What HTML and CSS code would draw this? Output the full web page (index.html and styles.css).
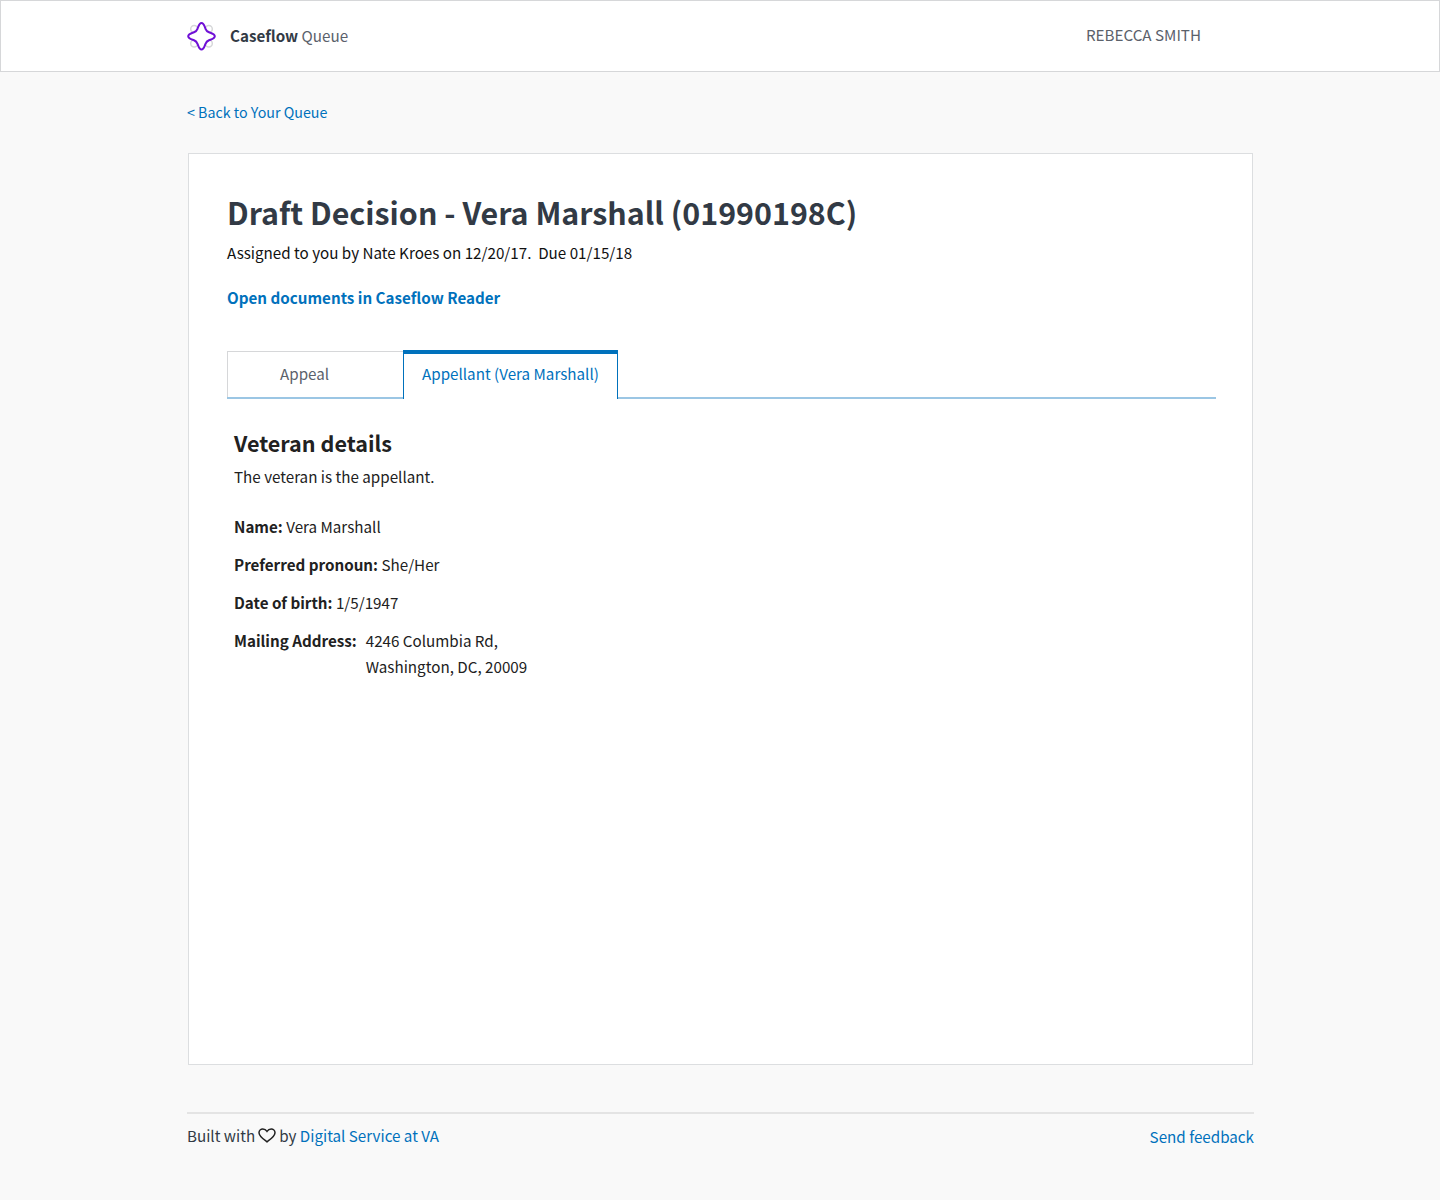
FILE: index.html
```html
<!DOCTYPE html>
<html lang="en">
<head>
<meta charset="utf-8">
<title>Caseflow Queue</title>
<link rel="stylesheet" href="styles.css">
</head>
<body>
<header class="topbar">
  <div class="topbar-inner">
    <a class="brand">
      <svg class="logo" width="32" height="32" viewBox="-0.5 -0.3 32 32" fill="none">
        <g stroke="#d6d7d9" stroke-width="1.5"><circle cx="8.7" cy="8.7" r="3.5"/><circle cx="23.3" cy="8.7" r="3.5"/><circle cx="8.7" cy="23.3" r="3.5"/><circle cx="23.3" cy="23.3" r="3.5"/></g>
        <path d="M16 2.700C18.300 2.700 19 6 20 8.500C20.800 10.500 21.500 11.200 23.500 12C26 13 29.300 13.700 29.300 16C29.300 18.300 26 19 23.500 20C21.500 20.800 20.800 21.500 20 23.500C19 26 18.300 29.300 16 29.300C13.700 29.300 13 26 12 23.500C11.200 21.500 10.500 20.800 8.500 20C6 19 2.700 18.300 2.700 16C2.700 13.700 6 13 8.500 12C10.500 11.200 11.200 10.500 12 8.500C13 6 13.700 2.700 16 2.700Z" stroke="#6f0fd6" stroke-width="2" fill="#fff" fill-opacity="0.9"/>
      </svg>
      <span class="brand-text"><strong>Caseflow</strong> Queue</span>
    </a>
    <div class="user">REBECCA SMITH</div>
  </div>
</header>
<div class="page">
  <a class="back">&lt; Back to Your Queue</a>
  <main class="card">
    <h1>Draft Decision - Vera Marshall (01990198C)</h1>
    <p class="assigned">Assigned to you by Nate Kroes on 12/20/17.&nbsp; Due 01/15/18</p>
    <a class="open-docs">Open documents in Caseflow Reader</a>
    <div class="tabs">
      <div class="tab">Appeal</div>
      <div class="tab active">Appellant (Vera Marshall)</div>
    </div>
    <section class="details">
      <h2>Veteran details</h2>
      <p class="intro">The veteran is the appellant.</p>
      <p class="row"><b>Name:</b> Vera Marshall</p>
      <p class="row"><b>Preferred pronoun:</b> She/Her</p>
      <p class="row"><b>Date of birth:</b> 1/5/1947</p>
      <div class="address"><b>Mailing Address:</b><div>4246 Columbia Rd,<br>Washington, DC, 20009</div></div>
    </section>
  </main>
  <footer class="footer">
    <div class="credit">Built with<svg class="heart" width="18" height="15" viewBox="0 0 18 15" fill="none"><path d="M9 13.800C6 11.500 1 8.500 1 4.800C1 2.500 2.800 1 4.800 1C6.500 1 8 1.800 9 3.300C10 1.800 11.500 1 13.200 1C15.200 1 17 2.500 17 4.800C17 8.500 12 11.500 9 13.800Z" stroke="#212121" stroke-width="1.500"/></svg>by <a>Digital Service at VA</a></div>
    <a class="feedback">Send feedback</a>
  </footer>
</div>
</body>
</html>
```
FILE: styles.css
```css
* { box-sizing: border-box; }
html, body { margin: 0; }
body {
  background: #f9f9f9;
  color: #212121;
  font-family: "Noto Sans CJK SC", "Lato", sans-serif;
  font-size: 15.2px;
  line-height: 26px;
  min-height: 1200px;
}
a { color: #0071bc; text-decoration: none; }
.topbar {
  height: 72px;
  background: #fff;
  border: 1px solid #d6d7d9;
}
.topbar-inner {
  height: 70px;
  padding: 0 238px 0 184px;
  display: flex;
  align-items: center;
  justify-content: space-between;
}
.brand { display: flex; align-items: center; gap: 13px; color: #5b616b; }
.brand-text { margin-top: -2px; }
.brand strong { color: #323a45; }
.logo { flex: none; }
.user { color: #5b616b; margin-top: -5px; }
.page { width: 1067px; margin-left: 187px; }
.back { display: block; margin-top: 27px; font-size: 14.25px; }
.card {
  margin: 28px 0 0 1px;
  width: 1065px;
  height: 912px;
  background: #fff;
  border: 1px solid #dcdee0;
  padding: 36px 36px 0 38px;
}
h1 { margin: 0; font-size: 30.4px; line-height: 44px; font-weight: 700; color: #323a45; }
.assigned { margin: 5px 0 0; color: #111; }
.open-docs { display: block; margin-top: 19px; font-weight: 700; }
.tabs { display: flex; margin-top: 40px; border-bottom: 2px solid #9bc6e4; height: 49px; }
.tab {
  width: 176px;
  height: 46px;
  margin-top: 1px;
  padding: 8px 0 0 52px;
  color: #5b616b;
  white-space: nowrap;
  border: 1px solid #d6d7d9;
  border-bottom: 0;
  border-right: 0;
  background: #fff;
}
.tab.active {
  width: 215px;
  margin-top: 0;
  height: 49px;
  padding: 6px 18px 0;
  color: #0071bc;
  border: 1px solid #0071bc;
  border-top: 4px solid #0071bc;
  border-bottom: 0;
}
.details { padding: 28px 0 0 7px; }
h2 { margin: 0; font-size: 21.55px; line-height: 32px; font-weight: 700; }
.intro { margin: 4px 0 24px; }
.row { margin: 0 0 12px; }
.address { display: flex; gap: 9px; }
.footer {
  margin-top: 47px;
  border-top: 2px solid #e4e4e4;
  padding-top: 8px;
  display: flex;
  justify-content: space-between;
  color: #323a45;
}
.credit { display: flex; align-items: center; height: 26px; white-space: pre; }
.heart { margin: 0 3px; }
.feedback { margin-top: 1px; }
```
